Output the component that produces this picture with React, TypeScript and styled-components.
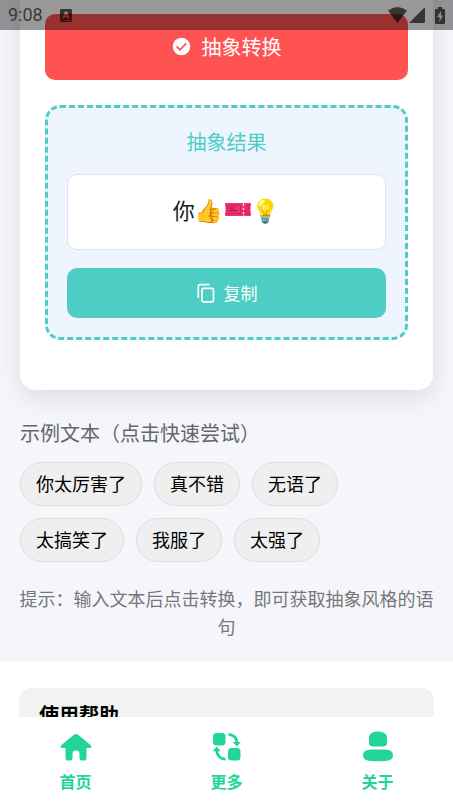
import React from "react";
import styled, { createGlobalStyle } from "styled-components";

const GlobalStyle = createGlobalStyle`
  * { box-sizing: border-box; }
  body { margin: 0; }
  body, button {
    font-family: "Noto Sans CJK SC", "Noto Color Emoji", sans-serif;
  }
`;

const Screen = styled.div`
  position: relative;
  display: flex;
  flex-direction: column;
  height: 100vh;
  overflow: hidden;
  background: #ffffff;
`;

const StatusBar = styled.header`
  position: absolute;
  inset: 0 0 auto;
  z-index: 2;
  display: flex;
  align-items: center;
  height: 30px;
  padding: 0 8px;
  background: rgba(0, 0, 0, 0.4);
  color: rgba(0, 0, 0, 0.65);
  font: 18px/30px Roboto, sans-serif;
`;

const StatusNotice = styled.span`
  display: flex;
  flex: 1;
  padding-left: 17px;
`;

const StatusIcons = styled.span`
  display: flex;
  align-items: center;
`;

const Content = styled.main`
  flex: 1;
  min-height: 0;
  overflow: hidden auto;
  scrollbar-width: none;
`;

const Converter = styled.section`
  padding: 0 20px 21px;
  background: #f5f6fb;
`;

const Card = styled.div`
  margin-top: -30px;
  padding: 44px 25px 50px;
  border-radius: 15px;
  background: #ffffff;
  box-shadow: 0 8px 26px rgba(0, 0, 0, 0.1);
`;

const ActionButton = styled.button<{ $tone: "primary" | "copy" }>`
  display: flex;
  align-items: center;
  justify-content: center;
  gap: ${(p) => (p.$tone === "primary" ? 10 : 8)}px;
  width: 100%;
  height: ${(p) => (p.$tone === "primary" ? 66 : 50)}px;
  padding: ${(p) => (p.$tone === "primary" ? 0 : "0 0 1px")};
  border: 0;
  border-radius: 10px;
  background: ${(p) => (p.$tone === "primary" ? "#ff5252" : "#4ecdc4")};
  color: #ffffff;
  font-size: ${(p) => (p.$tone === "primary" ? 20 : 17)}px;
  line-height: 24px;
  cursor: pointer;
`;

const ResultPanel = styled.section`
  margin-top: 25px;
  padding: 19px;
  border: 3px dashed #4ecdc4;
  border-radius: 15px;
  background: #eef5ff;
`;

const ResultTitle = styled.h2`
  margin: 0 0 17px;
  color: #4ecdc4;
  font-size: 20px;
  font-weight: 400;
  line-height: 30px;
  text-align: center;
`;

const ResultText = styled.output`
  display: flex;
  align-items: center;
  justify-content: center;
  height: 76px;
  margin-bottom: 18px;
  padding-bottom: 6px;
  border: 1px solid #e0e2e8;
  border-radius: 10px;
  background: #ffffff;
  color: #1c1c1c;
  font-size: 22px;
  line-height: 32px;
`;

const Emoji = styled.span`
  font-size: 23px;
`;

const ExamplesTitle = styled.h2`
  margin: 28px 0 14px;
  color: #666666;
  font-size: 20px;
  font-weight: 400;
  line-height: 30px;
`;

const Chips = styled.div`
  display: flex;
  flex-wrap: wrap;
  gap: 12px;
`;

const Chip = styled.button`
  height: 44px;
  padding: 0 15px 2px;
  border: 1px solid #dddddd;
  border-radius: 22px;
  background: #efefef;
  color: #000000;
  font-size: 18px;
  cursor: pointer;
`;

const Hint = styled.p`
  margin: 22px -2px 0;
  padding-bottom: 1px;
  color: #777777;
  font-size: 18px;
  line-height: 28px;
  text-align: center;
`;

const Help = styled.section`
  margin: 26px 19px;
  padding: 12px 20px 80px;
  border-radius: 13px;
  background: #f1f3f0;
`;

const HelpTitle = styled.h2`
  margin: 0;
  color: #000000;
  font-size: 20px;
  font-weight: 700;
  line-height: 30px;
`;

const TabBar = styled.nav`
  display: grid;
  grid-template-columns: repeat(3, 1fr);
  height: 88px;
  background: #ffffff;
`;

const Tab = styled.a`
  display: flex;
  flex-direction: column;
  align-items: center;
  gap: 6px;
  padding-top: 14px;
  color: #24d59a;
  font-size: 16px;
  font-weight: 700;
  line-height: 24px;
  text-decoration: none;
`;

const NoticeIcon = () => (
  <svg width="12" height="13" viewBox="0 0 12 13" aria-hidden="true">
    <path
      fill="currentColor"
      fillRule="evenodd"
      d="M1 0h10q1 0 1 1v11q0 1-1 1H1q-1 0-1-1V1q0-1 1-1ZM5 2.500 2.500 9.500h1.700l.5-1.500h2.600l.5 1.500h1.700L7 2.500ZM6 4.200l.8 2.500H5.200ZM6 11v1h1v-1Zm2 0v1h1v-1Zm2 0v1h1v-1Z"
    />
  </svg>
);

const WifiIcon = () => (
  <svg width="21" height="18" viewBox="0 0 21 18" aria-hidden="true">
    <path fill="currentColor" d="M0 4.500Q9.500-2.500 19 4.500L9.500 17Z" />
  </svg>
);

const SignalIcon = () => (
  <svg width="18" height="16" viewBox="0 0 18 16" aria-hidden="true">
    <path fill="currentColor" d="M16 1v14q0 1-1 1H1q-1 0 0-1L15 1q1-1 1 0Z" />
  </svg>
);

const BatteryIcon = () => (
  <svg width="18" height="17" viewBox="0 0 18 17" aria-hidden="true">
    <path
      fill="currentColor"
      fillRule="evenodd"
      d="M11 0h4v2h2q1 0 1 1v13q0 1-1 1H9q-1 0-1-1V3q0-1 1-1h2ZM14 4l-4 6h2.500v5L16 8.500h-2Z"
    />
  </svg>
);

const CheckIcon = () => (
  <svg width="20" height="20" viewBox="0 0 20 20" aria-hidden="true">
    <circle cx="9.500" cy="9.500" r="8.700" fill="currentColor" />
    <path d="m4.700 9.500 3.300 3.300 6.300-6.500" fill="none" stroke="#ff5252" strokeWidth="1.800" />
  </svg>
);

const CopyIcon = () => (
  <svg width="20" height="20" viewBox="0 0 20 20" fill="none" stroke="currentColor" strokeWidth="1.700" aria-hidden="true">
    <path d="M13.500 1.700H4q-1.700 0-1.700 1.700v11.400" />
    <rect x="6" y="5.300" width="11.500" height="13.500" rx="1.200" />
  </svg>
);

const TicketIcon = () => (
  <svg width="28" height="28" viewBox="0 0 28 28" role="img" aria-label="🎫">
    <path
      fill="#ec2f72"
      d="M2 8h16.500l1 1 1-1H26q1 0 1 1v2l-1 1 1 1-1 1.500 1 1.500-1 1 1 1v2q0 1-1 1h-5.500l-1-1-1 1H2q-1 0-1-1v-2l1-1-1-1 1-1.500L1 13l1-1-1-1V9q0-1 1-1Z"
    />
    <path fill="none" stroke="#d32062" d="M4 10.500h12.500v8H4ZM22 10.500h3v8h-3Z" />
    <path fill="none" stroke="#8e174f" d="M6 13h4M6 15.500h7" />
    <path stroke="#ffd4e3" strokeWidth="1.300" strokeDasharray="2 2" d="M19.500 9v12" />
  </svg>
);

const HomeIcon = () => (
  <svg width="32" height="32" viewBox="0 0 32 32" fill="currentColor" aria-hidden="true">
    <path d="M13.800 3.800q2.200-1.800 4.400 0L30.700 14.300q1 .9.500 1.900-.4.800-1.500.8h-3.200v10.300q0 2.200-2.200 2.200h-2.600q-2.200 0-2.200-2.200v-4.500q0-3.300-3.500-3.300t-3.500 3.300v4.500q0 2.200-2.200 2.200H7.700q-2.200 0-2.200-2.200V17H2.300q-1.100 0-1.500-.8-.5-1 .5-1.900Z" />
  </svg>
);

const MoreIcon = () => (
  <svg width="32" height="32" viewBox="0 0 32 32" fill="currentColor" aria-hidden="true">
    <rect x="2" y="2" width="12.500" height="12.500" rx="3.500" />
    <rect x="17" y="17" width="12.500" height="12.500" rx="3.500" />
    <path d="M17.500 3.300q8.200.6 8.600 9M14.500 28.200Q6 27.500 5.600 19" fill="none" stroke="currentColor" strokeWidth="2.800" />
    <path d="M21.700 11h8.200l-4 4.500ZM1.700 20.300h8L5.600 15.500Z" />
  </svg>
);

const PersonIcon = () => (
  <svg width="32" height="32" viewBox="0 0 32 32" fill="currentColor" aria-hidden="true">
    <path d="M7 6Q8 .5 16 .5T25 6v6q0 3.200-3.500 3.400-5.500.4-11 0Q7 15.200 7 12Z" />
    <path d="M1 24.300Q1 18.900 9 18.600q7-.4 14 0 8 .3 8 5.700t-8 5.700q-7 .6-14 0-8-.3-8-5.700Z" />
  </svg>
);

const examples = ["你太厉害了", "真不错", "无语了", "太搞笑了", "我服了", "太强了"];

const tabs = [
  { id: "home", label: "首页", Icon: HomeIcon },
  { id: "more", label: "更多", Icon: MoreIcon },
  { id: "about", label: "关于", Icon: PersonIcon },
];

export default function App() {
  return (
    <>
      <GlobalStyle />
      <Screen>
        <StatusBar>
          <time>9:08</time>
          <StatusNotice><NoticeIcon /></StatusNotice>
          <StatusIcons><WifiIcon /><SignalIcon /><BatteryIcon /></StatusIcons>
        </StatusBar>
        <Content>
          <Converter>
            <Card>
              <ActionButton type="button" $tone="primary"><CheckIcon />抽象转换</ActionButton>
              <ResultPanel>
                <ResultTitle>抽象结果</ResultTitle>
                <ResultText>
                  你<Emoji>👍</Emoji><TicketIcon /><Emoji>💡</Emoji>
                </ResultText>
                <ActionButton type="button" $tone="copy"><CopyIcon />复制</ActionButton>
              </ResultPanel>
            </Card>
            <ExamplesTitle>示例文本（点击快速尝试）</ExamplesTitle>
            <Chips>
              {examples.map((text) => <Chip key={text} type="button">{text}</Chip>)}
            </Chips>
            <Hint>提示：输入文本后点击转换，即可获取抽象风格的语句</Hint>
          </Converter>
          <Help><HelpTitle>使用帮助</HelpTitle></Help>
        </Content>
        <TabBar>
          {tabs.map(({ id, label, Icon }) => (
            <Tab key={id} href={`#${id}`}><Icon />{label}</Tab>
          ))}
        </TabBar>
      </Screen>
    </>
  );
}
